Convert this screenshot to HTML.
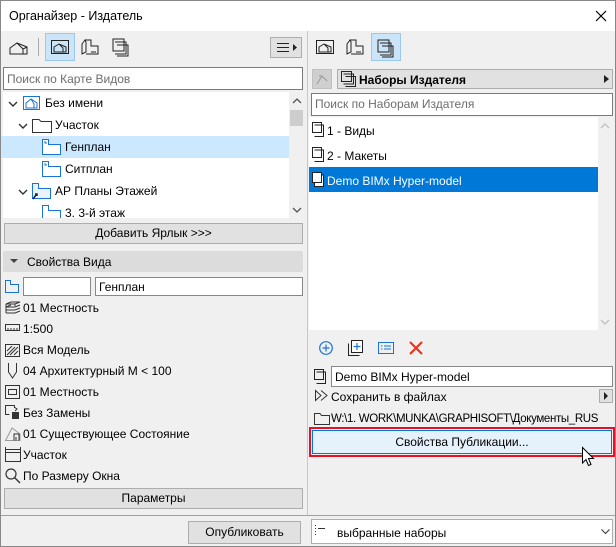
<!DOCTYPE html>
<html><head><meta charset="utf-8"><style>
*{box-sizing:border-box;margin:0;padding:0}
body{width:616px;height:547px;overflow:hidden;background:#f0f0f0;font-family:"Liberation Sans",sans-serif;font-size:12px;color:#000;position:relative}
.a{position:absolute}
.t{position:absolute;white-space:nowrap;line-height:14px}
.box{position:absolute;background:#fff;border:1px solid #7a7a7a}
.btn{position:absolute;background:#e1e1e1;border:1px solid #adadad;text-align:center;line-height:19px}
svg{position:absolute;overflow:visible}
.ph{color:#6d6d6d}
</style></head><body>
<div class="a" style="left:0;top:0;width:616px;height:547px;border:1px solid #888"></div>
<div class="a" style="left:1px;top:1px;width:614px;height:30px;background:#fff"></div>
<div class="t" style="left:9px;top:9px;font-size:12.5px">Органайзер - Издатель</div>
<svg style="left:288px;top:11px" width="10" height="10"><path d="M0 0L10 10M10 0L0 10" stroke="#000" stroke-width="1.2"/></svg>
<svg style="left:596px;top:11px" width="10" height="10"><path d="M0 0L10 10M10 0L0 10" stroke="#000" stroke-width="1.2"/></svg>
<div class="a" style="left:283px;top:6px;width:20px;height:20px;background:#fff"></div>

<!-- left toolbar -->
<svg style="left:9px;top:40px" width="20" height="16"><path d="M1 14V8L8 3L18 7V14ZM8 3L14 9V14M14 9L18 7" fill="none" stroke="#222"/></svg>
<div class="a" style="left:38px;top:38px;width:1px;height:18px;background:#aaa"></div>
<div class="a" style="left:45px;top:33px;width:30px;height:28px;background:#cce4f7;border:1px solid #99c9ef"></div>
<svg style="left:51px;top:40px" width="18" height="14"><rect x="0.5" y="0.5" width="17" height="13" fill="none" stroke="#222"/><path d="M3 12V7L8 4L15 7V12ZM8 4L12 8V12" fill="none" stroke="#222"/></svg>
<svg style="left:81px;top:38px" width="18" height="18"><path d="M4 2L1 6V16L5 14V4ZM4 2H10V8H17V16H5M10 14H15" fill="none" stroke="#222"/></svg>
<svg style="left:112px;top:37px" width="18" height="20"><path d="M1 2H12V14H1ZM3 5H14V17H3M12 2V4" fill="none" stroke="#222"/><path d="M5 8H16V19H5" fill="none" stroke="#222"/></svg>
<div class="a" style="left:270px;top:37px;width:32px;height:21px;background:#e1e1e1;border:1px solid #adadad"></div>
<svg style="left:277px;top:42px" width="22" height="12"><path d="M0 1.5H12M0 5.5H12M0 9.5H12" stroke="#222"/><path d="M16 2L20 5.5L16 9Z" fill="#222"/></svg>

<div class="box" style="left:3px;top:67px;width:300px;height:23px"></div>
<div class="t ph" style="left:7px;top:72px">Поиск по Карте Видов</div>

<!-- tree -->
<div class="a" style="left:3px;top:92px;width:286px;height:126px;background:#fff"></div>
<div class="a" style="left:289px;top:92px;width:14px;height:126px;background:#f0f0f0"></div>
<div class="a" style="left:290px;top:110px;width:13px;height:16px;background:#cdcdcd"></div>
<svg style="left:293px;top:98px" width="8" height="6"><path d="M0 5L4 1L8 5" fill="none" stroke="#555" stroke-width="1.3"/></svg>
<svg style="left:293px;top:207px" width="8" height="6"><path d="M0 1L4 5L8 1" fill="none" stroke="#555" stroke-width="1.3"/></svg>
<div class="a" style="left:1px;top:136px;width:288px;height:22px;background:#cce8ff"></div>
<svg style="left:8px;top:101px" width="10" height="6"><path d="M1 1L5 5L9 1" fill="none" stroke="#333" stroke-width="1.4"/></svg>
<svg style="left:23px;top:96px" width="17" height="14"><rect x="0.5" y="0.5" width="16" height="13" fill="#fff" stroke="#1a73d9"/><path d="M3 12V7L8 3L14 7V12ZM8 3L11 8V12" fill="none" stroke="#1a73d9"/></svg>
<div class="t" style="left:45px;top:96px">Без имени</div>
<svg style="left:18px;top:123px" width="10" height="6"><path d="M1 1L5 5L9 1" fill="none" stroke="#333" stroke-width="1.4"/></svg>
<svg style="left:32px;top:118px" width="20" height="15"><path d="M0.5 1.5H7L9 3.5H19.5V14.5H0.5Z" fill="#fff" stroke="#333"/></svg>
<div class="t" style="left:55px;top:118px">Участок</div>
<svg style="left:42px;top:139px" width="19" height="16"><path d="M0.5 0.5H6.5V5.5H18.5V15.5H0.5Z" fill="#fff" stroke="#1a73d9"/><path d="M3 2V4H5" stroke="#1a73d9" fill="none"/></svg>
<div class="t" style="left:65px;top:140px">Генплан</div>
<svg style="left:42px;top:161px" width="19" height="16"><path d="M0.5 0.5H6.5V5.5H18.5V15.5H0.5Z" fill="#fff" stroke="#1a73d9"/><path d="M3 2V4H5" stroke="#1a73d9" fill="none"/></svg>
<div class="t" style="left:65px;top:162px">Ситплан</div>
<svg style="left:18px;top:189px" width="10" height="6"><path d="M1 1L5 5L9 1" fill="none" stroke="#333" stroke-width="1.4"/></svg>
<svg style="left:32px;top:183px" width="19" height="17"><path d="M0.5 0.5H6.5V5.5H18.5V15.5H0.5Z" fill="#eaf3fd" stroke="#1a73d9"/><path d="M1 16L4 12M3 11H5V13" stroke="#222" stroke-width="1.5" fill="none"/></svg>
<div class="t" style="left:55px;top:184px">АР Планы Этажей</div>
<svg style="left:42px;top:205px" width="19" height="13"><path d="M0.5 13V0.5H6.5V5.5H18.5V13" fill="#fff" stroke="#1a73d9"/></svg>
<div class="t" style="left:65px;top:206px">3. 3-й этаж</div>

<div class="btn" style="left:4px;top:223px;width:299px;height:21px">Добавить Ярлык &gt;&gt;&gt;</div>

<div class="a" style="left:3px;top:251px;width:300px;height:21px;background:#dcdcdc;border-radius:2px"></div>
<svg style="left:10px;top:259px" width="8" height="5"><path d="M0 0H8L4 4Z" fill="#444"/></svg>
<div class="t" style="left:27px;top:255px">Свойства Вида</div>
<svg style="left:5px;top:280px" width="14" height="13"><path d="M0.5 0.5H5.5V4.5H13.5V12.5H0.5Z" fill="none" stroke="#1a73d9"/></svg>
<div class="box" style="left:23px;top:277px;width:68px;height:19px;border-color:#888"></div>
<div class="box" style="left:95px;top:277px;width:208px;height:19px;border-color:#888"></div>
<div class="t" style="left:99px;top:280px">Генплан</div>

<svg style="left:5px;top:301px" width="16" height="13"><path d="M1 3L6 1H15L10 3ZM1 3H10V5M1 6L6 4M1 6H10L15 4M1 9H10L15 7M1 12H10L15 10M1 3V12" fill="none" stroke="#333"/></svg>
<div class="t" style="left:23px;top:301px">01 Местность</div>
<svg style="left:5px;top:324px" width="15" height="8"><rect x="0.5" y="0.5" width="14" height="6" fill="none" stroke="#333"/><path d="M3 4V7M6 4V7M9 4V7M12 4V7" stroke="#333"/></svg>
<div class="t" style="left:23px;top:322px">1:500</div>
<svg style="left:5px;top:344px" width="15" height="13"><rect x="0.5" y="0.5" width="14" height="12" fill="none" stroke="#333"/><path d="M2 7L7 2M5 11L13 3M9 11L13 7M2 11L10 3" stroke="#333"/></svg>
<div class="t" style="left:23px;top:343px">Вся Модель</div>
<svg style="left:8px;top:363px" width="9" height="16"><path d="M0.5 0V9L4.5 15L8.5 9V0" fill="none" stroke="#333"/></svg>
<div class="t" style="left:23px;top:364px">04 Архитектурный М &lt; 100</div>
<svg style="left:5px;top:385px" width="15" height="14"><rect x="0.5" y="0.5" width="14" height="13" fill="none" stroke="#333"/><rect x="3.5" y="4.5" width="8" height="5" fill="none" stroke="#333"/></svg>
<div class="t" style="left:23px;top:385px">01 Местность</div>
<svg style="left:5px;top:405px" width="15" height="15"><path d="M4.5 9.5H0.5V0.5H9.5V3" fill="none" stroke="#333"/><rect x="7" y="7" width="7" height="7" fill="#333"/><path d="M9 2L12 4L10 6" fill="none" stroke="#333"/></svg>
<div class="t" style="left:23px;top:406px">Без Замены</div>
<svg style="left:5px;top:426px" width="16" height="15"><path d="M0.5 14.5L7 2L15 8V14.5Z" fill="none" stroke="#999"/><path d="M9 14.5V8H14V14.5M11 11V14.5" fill="none" stroke="#333"/></svg>
<div class="t" style="left:23px;top:427px">01 Существующее Состояние</div>
<svg style="left:5px;top:447px" width="16" height="15"><path d="M0 2.5H16M0.5 0V5M15.5 0V5" stroke="#333"/><rect x="0.5" y="5.5" width="15" height="9" fill="none" stroke="#333"/></svg>
<div class="t" style="left:23px;top:448px">Участок</div>
<svg style="left:5px;top:468px" width="16" height="16"><circle cx="6" cy="6" r="5" fill="none" stroke="#333" stroke-width="1.2"/><path d="M9.5 9.5L15 15" stroke="#333" stroke-width="1.4"/></svg>
<div class="t" style="left:23px;top:469px">По Размеру Окна</div>

<div class="btn" style="left:4px;top:488px;width:299px;height:21px">Параметры</div>
<div class="a" style="left:1px;top:515px;width:614px;height:1px;background:#a0a0a0"></div>
<div class="btn" style="left:188px;top:521px;width:113px;height:23px;line-height:21px">Опубликовать</div>
<div class="box" style="left:311px;top:519px;width:302px;height:25px;border-color:#adadad"></div>
<svg style="left:315px;top:524px" width="10" height="12"><path d="M0 1.5H1M0 4.5H1M0 7.5H1M0 10.5H1M3 4.5H10" stroke="#333"/></svg>
<div class="t" style="left:337px;top:526px">выбранные наборы</div>
<svg style="left:601px;top:529px" width="9" height="6"><path d="M0.5 0.5L4.5 4.5L8.5 0.5" fill="none" stroke="#333"/></svg>

<!-- divider -->
<div class="a" style="left:307px;top:31px;width:1px;height:484px;background:#c8c8c8"></div>

<!-- right toolbar -->
<svg style="left:316px;top:40px" width="18" height="14"><rect x="0.5" y="0.5" width="17" height="13" fill="none" stroke="#222"/><path d="M3 12V7L8 4L15 7V12ZM8 4L12 8V12" fill="none" stroke="#222"/></svg>
<svg style="left:346px;top:38px" width="18" height="18"><path d="M4 2L1 6V16L5 14V4ZM4 2H10V8H17V16H5M10 14H15" fill="none" stroke="#222"/></svg>
<div class="a" style="left:371px;top:33px;width:30px;height:28px;background:#cce4f7;border:1px solid #99c9ef"></div>
<svg style="left:377px;top:38px" width="18" height="20"><path d="M1 2H12V14H1ZM3 5H14V17H3M12 2V4" fill="none" stroke="#222"/><path d="M5 8H16V19H5" fill="none" stroke="#222"/></svg>

<div class="a" style="left:312px;top:69px;width:20px;height:20px;background:#cfcfcf;border:1px solid #c0c0c0"></div>
<svg style="left:316px;top:73px" width="12" height="12"><path d="M1 11L6 3L11 8M6 3H3" fill="none" stroke="#999"/></svg>
<div class="a" style="left:337px;top:69px;width:276px;height:20px;background:#e1e1e1;border:1px solid #adadad"></div>
<svg style="left:341px;top:71px" width="16" height="17"><path d="M0.5 0.5H10.5V10.5H0.5ZM2.5 3H12.5V13H2.5M4.5 5.5H14.5V15.5H4.5" fill="none" stroke="#222"/></svg>
<div class="t" style="left:359px;top:73px;font-weight:bold">Наборы Издателя</div>
<svg style="left:604px;top:75px" width="5" height="8"><path d="M0 0L5 4L0 8Z" fill="#222"/></svg>
<div class="box" style="left:311px;top:93px;width:302px;height:23px"></div>
<div class="t ph" style="left:315px;top:97px">Поиск по Наборам Издателя</div>

<div class="a" style="left:309px;top:117px;width:289px;height:213px;background:#fff"></div>
<div class="a" style="left:598px;top:117px;width:15px;height:213px;background:#f0f0f0"></div>
<svg style="left:601px;top:123px" width="8" height="6"><path d="M0 5L4 1L8 5" fill="none" stroke="#c0c0c0" stroke-width="1.3"/></svg>
<svg style="left:601px;top:319px" width="8" height="6"><path d="M0 1L4 5L8 1" fill="none" stroke="#c0c0c0" stroke-width="1.3"/></svg>
<div class="a" style="left:309px;top:167px;width:289px;height:25px;background:#0078d7"></div>
<svg style="left:312px;top:122px" width="13" height="15"><path d="M0.5 0.5H9.5V10.5H0.5ZM2.5 3H11.5V14.5H2.5" fill="#fff" stroke="#222"/></svg>
<div class="t" style="left:327px;top:124px">1 - Виды</div>
<svg style="left:312px;top:147px" width="13" height="15"><path d="M0.5 0.5H9.5V10.5H0.5ZM2.5 3H11.5V14.5H2.5" fill="#fff" stroke="#222"/></svg>
<div class="t" style="left:327px;top:149px">2 - Макеты</div>
<svg style="left:312px;top:172px" width="13" height="15"><path d="M2.5 3H11.5V14.5H2.5Z" fill="#fff" stroke="#222"/><path d="M0.5 0.5H9.5V10.5H0.5Z" fill="#fff" stroke="#222"/></svg>
<div class="t" style="left:327px;top:174px;color:#fff">Demo BIMx Hyper-model</div>

<svg style="left:319px;top:341px" width="14" height="14"><circle cx="7" cy="7" r="6.3" fill="none" stroke="#1a73d9" stroke-width="1.2"/><path d="M7 3.5V10.5M3.5 7H10.5" stroke="#1a73d9" stroke-width="1.2"/></svg>
<svg style="left:348px;top:340px" width="15" height="16"><path d="M0.5 3.5V15.5H11.5" fill="none" stroke="#222"/><rect x="3.5" y="0.5" width="11" height="12" fill="#fff" stroke="#222"/><path d="M9 3V10M5.5 6.5H12.5" stroke="#1a73d9" stroke-width="1.2"/></svg>
<svg style="left:378px;top:342px" width="16" height="12"><rect x="0.5" y="0.5" width="15" height="11" fill="none" stroke="#1a73d9"/><path d="M3 4H4.5M6 4H13M3 7H4.5M6 7H13" stroke="#1a73d9"/></svg>
<svg style="left:409px;top:341px" width="14" height="14"><path d="M1 1L13 13M13 1L1 13" stroke="#e8351d" stroke-width="2.2"/></svg>

<svg style="left:314px;top:369px" width="13" height="15"><path d="M0.5 0.5H9.5V10.5H0.5ZM2.5 3H11.5V14.5H2.5" fill="none" stroke="#222"/></svg>
<div class="box" style="left:331px;top:366px;width:282px;height:21px;border-color:#888"></div>
<div class="t" style="left:335px;top:370px">Demo BIMx Hyper-model</div>
<svg style="left:315px;top:390px" width="14" height="11"><path d="M0.5 0.5L6 5.5L0.5 10.5ZM6 0.5L12 5.5L6 10.5" fill="none" stroke="#333"/></svg>
<div class="t" style="left:331px;top:390px">Сохранить в файлах</div>
<div class="a" style="left:599px;top:389px;width:14px;height:14px;background:#e1e1e1;border:1px solid #adadad"></div>
<svg style="left:604px;top:392px" width="4" height="8"><path d="M0 0L4 4L0 8Z" fill="#222"/></svg>
<svg style="left:314px;top:413px" width="16" height="12"><path d="M0.5 0.5H6L7.5 2.5H15.5V11.5H0.5Z" fill="none" stroke="#333"/></svg>
<div class="t" style="left:331px;top:412px;font-size:11.5px;letter-spacing:-0.35px">W:\1. WORK\MUNKA\GRAPHISOFT\Документы_RUS</div>
<div class="a" style="left:309px;top:427px;width:306px;height:30px;border:2px solid #e81123"></div>
<div class="a" style="left:312px;top:430px;width:300px;height:24px;background:#e5f1fb;border:1px solid #0078d7"></div>
<div class="t" style="left:312px;top:435px;width:300px;text-align:center">Свойства Публикации...</div>
<svg style="left:582px;top:447px" width="13" height="20"><path d="M0.5 0.5V16L4 12.5L6.5 18.5L9 17.5L6.5 11.5H11.5Z" fill="#fff" stroke="#000"/></svg>
</body></html>
